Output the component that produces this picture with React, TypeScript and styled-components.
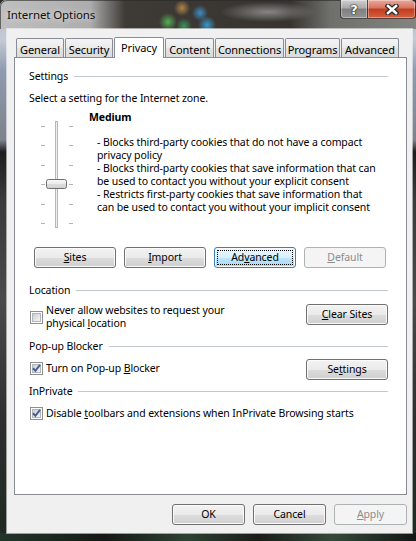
import React from "react";
import styled, { createGlobalStyle } from "styled-components";

const GlobalStyle = createGlobalStyle`
  html, body {
    margin: 0;
    padding: 0;
    background: #2a2a2a;
  }
  body {
    font-family: "Noto Sans", "Open Sans", sans-serif;
    font-size: 10.5px;
    letter-spacing: -0.1px;
    color: #000;
  }
`;

const tabs = [
  { label: "General", width: 48 },
  { label: "Security", width: 48 },
  { label: "Privacy", width: 50, active: true },
  { label: "Content", width: 49 },
  { label: "Connections", width: 69 },
  { label: "Programs", width: 55 },
  { label: "Advanced", width: 58 },
];

const bullets = [
  ["- Blocks third-party cookies that do not have a compact", "privacy policy"],
  [
    "- Blocks third-party cookies that save information that can",
    "be used to contact you without your explicit consent",
  ],
  [
    "- Restricts first-party cookies that save information that",
    "can be used to contact you without your implicit consent",
  ],
];

const tickRows = [6, 25, 45, 64, 84, 103];

function PrivacySlider() {
  return (
    <SliderSvg width="35" height="110" viewBox="0 0 35 110">
      <defs>
        <linearGradient id="thumbFill" x1="0" y1="0" x2="0" y2="1">
          <stop offset="0" stopColor="#f8f8f8" />
          <stop offset="0.5" stopColor="#ebebeb" />
          <stop offset="0.51" stopColor="#dcdcdc" />
          <stop offset="1" stopColor="#d2d2d2" />
        </linearGradient>
      </defs>
      {tickRows.map((y) => (
        <g key={y} stroke="#b4b4b4" strokeWidth="1">
          <line x1="1" y1={y + 0.5} x2="5" y2={y + 0.5} />
          <line x1="29" y1={y + 0.5} x2="33" y2={y + 0.5} />
        </g>
      ))}
      <rect x="15.5" y="1.5" width="2" height="106" fill="#eceef0" stroke="#b3b8bd" />
      <rect x="6.5" y="59.5" width="20" height="9" rx="2" fill="url(#thumbFill)" stroke="#707070" />
    </SliderSvg>
  );
}

function CheckBox({ checked }: { checked?: boolean }) {
  return (
    <Box>
      <BoxInner />
      {checked && (
        <CheckMark width="13" height="13" viewBox="0 0 13 13">
          <path d="M3 6.2 L5.4 8.8 L10 2.8" fill="none" stroke="#4b5f92" strokeWidth="2" />
        </CheckMark>
      )}
    </Box>
  );
}

function App() {
  return (
    <>
      <GlobalStyle />
      <Window>
        <TitleBar>
          <Title>Internet Options</Title>
          <Caption>
            <CaptionButton $kind="help">
              <HelpGlyph>?</HelpGlyph>
            </CaptionButton>
            <CaptionButton $kind="close">
              <svg width="14" height="11" viewBox="0 0 14 11">
                <path d="M3 2 L11 9 M11 2 L3 9" stroke="#2b2b2b" strokeWidth="5" strokeLinecap="square" />
                <path d="M3 2 L11 9 M11 2 L3 9" stroke="#ffffff" strokeWidth="2.6" strokeLinecap="square" />
              </svg>
            </CaptionButton>
          </Caption>
        </TitleBar>

        <Client>
          <TabStrip>
            {tabs.map((t) => (
              <Tab key={t.label} $w={t.width} $active={t.active}>
                {t.label}
              </Tab>
            ))}
          </TabStrip>

          <Panel>
            <SectionHeader>Settings</SectionHeader>
            <Prompt>Select a setting for the Internet zone.</Prompt>

            <Zone>
              <SliderWrap>
                <PrivacySlider />
              </SliderWrap>
              <LevelInfo>
                <LevelName>Medium</LevelName>
                <Description>
                  {bullets.map((lines, i) => (
                    <div key={i}>
                      {lines.map((l) => (
                        <Line key={l}>{l}</Line>
                      ))}
                    </div>
                  ))}
                </Description>
              </LevelInfo>
            </Zone>

            <ButtonRow>
              <Button $w={82}>
                <U>S</U>ites
              </Button>
              <Button $w={82}>
                <U>I</U>mport
              </Button>
              <Button $w={82} $focused>
                Ad<U>v</U>anced
              </Button>
              <Button $w={82} disabled>
                <U>D</U>efault
              </Button>
            </ButtonRow>

            <SectionHeader $mt={16}>Location</SectionHeader>
            <OptionRow $mt={7}>
              <CheckItem $mt={0}>
                <CheckBox />
                <CheckText>
                  <Line>Never allow websites to request your</Line>
                  <Line>
                    physical <U>l</U>ocation
                  </Line>
                </CheckText>
              </CheckItem>
              <Button $w={82}>
                <U>C</U>lear Sites
              </Button>
            </OptionRow>

            <SectionHeader $mt={10}>Pop-up Blocker</SectionHeader>
            <OptionRow $mt={6}>
              <CheckItem $mt={3}>
                <CheckBox checked />
                <CheckText>
                  <Line>
                    Turn on Pop-up <U>B</U>locker
                  </Line>
                </CheckText>
              </CheckItem>
              <Button $w={82}>
                Se<U>t</U>tings
              </Button>
            </OptionRow>

            <SectionHeader $mt={5}>InPrivate</SectionHeader>
            <OptionRow $mt={9}>
              <CheckItem $mt={0}>
                <CheckBox checked />
                <CheckText>
                  <Line>
                    Disable <U>t</U>oolbars and extensions when InPrivate Browsing starts
                  </Line>
                </CheckText>
              </CheckItem>
            </OptionRow>
          </Panel>

          <Footer>
            <Button $w={73}>OK</Button>
            <Button $w={73}>Cancel</Button>
            <Button $w={73} disabled>
              <U>A</U>pply
            </Button>
          </Footer>
        </Client>
      </Window>
    </>
  );
}

export default App;

const Window = styled.div`
  width: 416px;
  height: 541px;
  box-sizing: border-box;
  padding-bottom: 8px;
  display: flex;
  flex-direction: column;
  overflow: hidden;
  border-radius: 6px 6px 0 0;
  background:
    linear-gradient(90deg, #22362a 0, #161816 25%, #2c4233 45%, #1a1c1a 62%, #33493a 80%, #141614 100%)
      bottom / 100% 8px no-repeat,
    linear-gradient(
      180deg,
      #b9bdc3 0,
      #c3cad3 40px,
      #8f9bb0 70px,
      #7d838c 140px,
      #1d1d1d 152px,
      #3b3b3b 200px,
      #4a4a4a 300px,
      #2e2e2e 420px,
      #1f2922 541px
    );
`;

const TitleBar = styled.div`
  height: 29px;
  flex-shrink: 0;
  display: flex;
  justify-content: space-between;
  align-items: flex-start;
  border-radius: 6px 6px 0 0;
  box-shadow: inset 1px 1px 0 rgba(40, 40, 40, 0.6);
  background:
    radial-gradient(circle at 168px 22px, rgba(86, 178, 88, 0.95) 0, rgba(86, 178, 88, 0) 9px),
    radial-gradient(circle at 182px 8px, rgba(196, 146, 78, 0.85) 0, rgba(196, 146, 78, 0) 8px),
    radial-gradient(circle at 200px 13px, rgba(62, 150, 214, 0.9) 0, rgba(62, 150, 214, 0) 8px),
    radial-gradient(circle at 207px 25px, rgba(56, 162, 222, 0.9) 0, rgba(56, 162, 222, 0) 9px),
    radial-gradient(circle at 184px 26px, rgba(60, 168, 104, 0.8) 0, rgba(60, 168, 104, 0) 8px),
    radial-gradient(ellipse 48px 10px at 268px 12px, rgba(160, 160, 160, 0.75), rgba(160, 160, 160, 0)),
    linear-gradient(
      90deg,
      #bfbfbf 0,
      #adadad 90px,
      #3e3b36 125px,
      #37342f 290px,
      #6f6f6c 330px,
      #838380 416px
    );
`;

const Title = styled.div`
  margin: 8px 0 0 7px;
  font-size: 11.5px;
  line-height: 14px;
  color: #111;
  text-shadow: 0 0 6px rgba(255, 255, 255, 0.9);
`;

const Caption = styled.div`
  display: flex;
`;

const CaptionButton = styled.div<{ $kind: "help" | "close" }>`
  width: ${(p) => (p.$kind === "help" ? 28 : 48)}px;
  height: 19px;
  box-sizing: border-box;
  display: flex;
  align-items: center;
  justify-content: center;
  border: 1px solid rgba(20, 20, 20, 0.7);
  border-top: none;
  ${(p) => (p.$kind === "close" ? "border-left: none;" : "")}
  border-radius: ${(p) => (p.$kind === "help" ? "0 0 0 4px" : "0 0 4px 0")};
  box-shadow: inset 0 0 0 1px rgba(255, 255, 255, 0.35);
  background: ${(p) =>
    p.$kind === "help"
      ? "linear-gradient(#cfcfcf, #a9a9a9 45%, #7f7f7f 50%, #939393)"
      : "linear-gradient(#eaa899, #d6735e 45%, #c23b20 50%, #d5603f)"};
`;

const HelpGlyph = styled.span`
  font-family: "DejaVu Sans", sans-serif;
  font-weight: bold;
  font-size: 13px;
  line-height: 13px;
  color: #fff;
  text-shadow: 0 0 1px #222, 0 0 1px #222, 0 0 2px #333;
`;

const Client = styled.div`
  flex: 1;
  margin: 0 4px 0 7px;
  display: flex;
  flex-direction: column;
  background: #f0f0f0;
  outline: 1px solid rgba(255, 255, 255, 0.55);
`;

const TabStrip = styled.div`
  display: flex;
  align-items: flex-end;
  margin-top: 8px;
  padding-left: 9px;
  height: 20px;
`;

const Tab = styled.div<{ $w: number; $active?: boolean }>`
  width: ${(p) => p.$w}px;
  height: ${(p) => (p.$active ? 21 : 19)}px;
  margin-right: 1px;
  margin-bottom: ${(p) => (p.$active ? -1 : 0)}px;
  box-sizing: border-box;
  display: flex;
  align-items: center;
  justify-content: center;
  padding: ${(p) => (p.$active ? "0 0 2px" : "2px 0 0")};
  border: 1px solid #898c95;
  border-bottom: none;
  border-radius: 2px 2px 0 0;
  position: relative;
  z-index: ${(p) => (p.$active ? 1 : 0)};
  font-size: 11px;
  line-height: 13px;
  white-space: nowrap;
  background: ${(p) =>
    p.$active ? "#ffffff" : "linear-gradient(#f4f4f4, #ebebeb 50%, #e2e2e2 51%, #dcdcdc)"};
`;

const Panel = styled.div`
  height: 438px;
  box-sizing: border-box;
  margin: 0 5px 0 7px;
  padding: 12px 18px 0 14px;
  background: #fff;
  border: 1px solid #898c95;
  display: flex;
  flex-direction: column;
`;

const SectionHeader = styled.div<{ $mt?: number }>`
  display: flex;
  align-items: center;
  gap: 6px;
  height: 13px;
  line-height: 13px;
  margin-top: ${(p) => p.$mt ?? 0}px;
  white-space: nowrap;

  &::after {
    content: "";
    flex: 1;
    height: 1px;
    background: #c3c8cc;
  }
`;

const Prompt = styled.div`
  margin-top: 9px;
  line-height: 13px;
`;

const Zone = styled.div`
  display: flex;
  margin-top: 6px;
`;

const SliderWrap = styled.div`
  margin: 9px 0 0 11px;
`;

const SliderSvg = styled.svg`
  display: block;
`;

const LevelInfo = styled.div`
  margin-left: 14px;
`;

const LevelName = styled.div`
  font-weight: bold;
  line-height: 13px;
`;

const Description = styled.div`
  margin-top: 12px;
  padding-left: 8px;
  white-space: nowrap;
`;

const Line = styled.div`
  height: 13px;
  line-height: 13px;
`;

const ButtonRow = styled.div`
  display: flex;
  gap: 8px;
  margin: 17px 0 0 5px;
`;

const Button = styled.button<{ $w: number; $focused?: boolean }>`
  width: ${(p) => p.$w}px;
  height: 21px;
  box-sizing: border-box;
  padding: 0;
  font-family: inherit;
  font-size: 10.5px;
  letter-spacing: -0.1px;
  line-height: 13px;
  color: #000;
  border: 1px solid #707070;
  border-radius: 3px;
  box-shadow: inset 0 0 0 1px #fbfbfb;
  background: linear-gradient(#f2f2f2, #ebebeb 50%, #dddddd 51%, #cfcfcf);
  flex-shrink: 0;

  ${(p) =>
    p.$focused &&
    `
    border-color: #3c7fb1;
    box-shadow: inset 0 0 0 1px #f4fbff;
    background: linear-gradient(#eaf6fd, #d9f0fc 50%, #bee6fd 51%, #a7d9f5);
    outline: 1px dotted #000;
    outline-offset: -4px;
  `}

  &:disabled {
    color: #8d8d8d;
    border-color: #adb2b5;
    box-shadow: none;
    background: #f4f4f4;
  }
`;

const U = styled.span`
  text-decoration: underline;
  text-underline-offset: 1px;
`;

const OptionRow = styled.div<{ $mt: number }>`
  display: flex;
  justify-content: space-between;
  align-items: flex-start;
  margin-top: ${(p) => p.$mt}px;
`;

const CheckItem = styled.div<{ $mt: number }>`
  display: flex;
  align-items: center;
  gap: 3px;
  margin: ${(p) => p.$mt}px 0 0 1px;
`;

const CheckText = styled.div`
  white-space: nowrap;
`;

const Box = styled.span`
  position: relative;
  width: 13px;
  height: 13px;
  box-sizing: border-box;
  border: 1px solid #8e8f8f;
  padding: 1px;
  background: #fff;
  flex-shrink: 0;
`;

const BoxInner = styled.span`
  display: block;
  width: 9px;
  height: 9px;
  box-sizing: border-box;
  border: 1px solid #b2b7bc;
  background: linear-gradient(135deg, #cbcfd5, #f6f6f6);
`;

const CheckMark = styled.svg`
  position: absolute;
  left: -1px;
  top: -1px;
`;

const Footer = styled.div`
  display: flex;
  justify-content: flex-end;
  gap: 8px;
  padding: 9px 5px 0 0;
`;
